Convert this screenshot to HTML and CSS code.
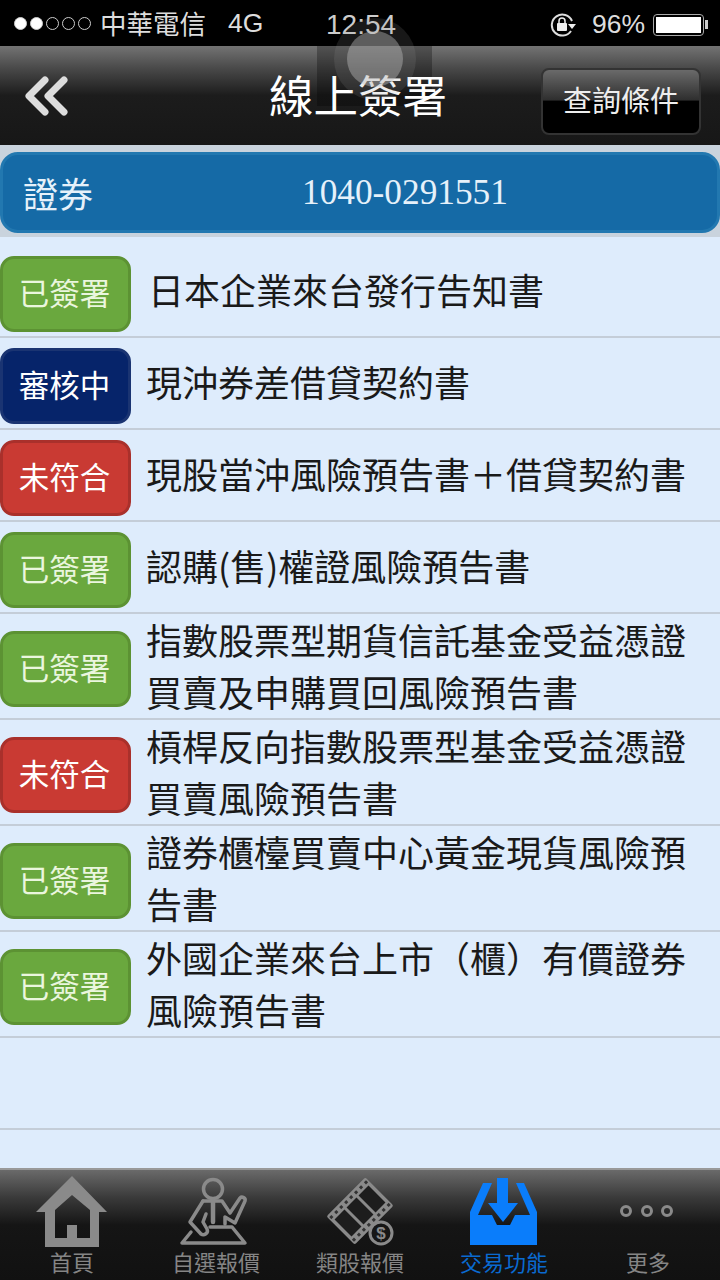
FILE: index.html
```html
<!DOCTYPE html>
<html lang="zh-Hant">
<head>
  <meta charset="UTF-8">
  <title>線上簽署</title>
  <link rel="stylesheet" href="styles.css">
</head>
<body>
  <div class="phone">
    <div class="status">
      <div class="status-left">
        <span class="signal"><i class="on"></i><i class="on"></i><i></i><i></i><i></i></span>
        <span class="carrier">中華電信</span>
        <span class="net">4G</span>
      </div>
      <div class="clock">12:54</div>
      <div class="status-right">
        <svg class="lock" width="26" height="24" viewBox="0 0 26 24" fill="none" stroke="#ddd" stroke-width="2">
          <path d="M21 18a10.500 10.500 0 1 1 1-10"/>
          <path d="M18 11h8l-4 5z" fill="#eee" stroke="none"/>
          <rect x="7" y="10" width="10" height="8" rx="1" fill="#eee" stroke="none"/>
          <path d="M9 10V8a3 3 0 0 1 6 0v2" stroke-width="1.500" stroke="#eee"/>
        </svg>
        <span class="pct">96%</span>
        <span class="battery"><span class="battery-fill"></span></span>
        <span class="battery-tip"></span>
      </div>
    </div>

    <div class="header">
      <div class="touch-square"></div>
      <svg class="back" width="46" height="42" viewBox="0 0 46 42" fill="none" stroke="#ddd" stroke-width="7" stroke-linecap="round" stroke-linejoin="round">
        <path d="M21 5L5 21l16 16"/>
        <path d="M40 5L24 21l16 16"/>
      </svg>
      <div class="title">線上簽署</div>
      <div class="query">查詢條件</div>
    </div>

    <div class="account-wrap">
      <div class="account">
        <span class="account-type">證券</span>
        <span class="account-no">1040-0291551</span>
      </div>
    </div>

    <div class="list">
      <div class="row">
        <span class="badge green">已簽署</span>
        <span class="doc first">日本企業來台發行告知書</span>
      </div>
      <div class="row">
        <span class="badge navy">審核中</span>
        <span class="doc">現沖券差借貸契約書</span>
      </div>
      <div class="row">
        <span class="badge red">未符合</span>
        <span class="doc">現股當沖風險預告書＋借貸契約書</span>
      </div>
      <div class="row">
        <span class="badge green">已簽署</span>
        <span class="doc">認購(售)權證風險預告書</span>
      </div>
      <div class="row tall">
        <span class="badge green">已簽署</span>
        <span class="doc">指數股票型期貨信託基金受益憑證<br>買賣及申購買回風險預告書</span>
      </div>
      <div class="row tall">
        <span class="badge red">未符合</span>
        <span class="doc">槓桿反向指數股票型基金受益憑證<br>買賣風險預告書</span>
      </div>
      <div class="row tall">
        <span class="badge green">已簽署</span>
        <span class="doc">證券櫃檯買賣中心黃金現貨風險預<br>告書</span>
      </div>
      <div class="row tall">
        <span class="badge green">已簽署</span>
        <span class="doc">外國企業來台上市（櫃）有價證券<br>風險預告書</span>
      </div>
      <div class="row"></div>
    </div>

    <div class="tabs">
      <div class="tab">
        <svg width="72" height="72" viewBox="0 0 72 72" fill="#8a8a8a">
          <path fill-rule="evenodd" d="M36 0L71 36H63V71H9V36H0z M36 19L19 34V62H31V49H41V62H54V34z"/>
        </svg>
        <span>首頁</span>
      </div>
      <div class="tab">
        <svg width="72" height="72" viewBox="0 0 72 72" fill="none" stroke="#8a8a8a" stroke-width="3.500" stroke-linejoin="round" stroke-linecap="round">
          <circle cx="33" cy="13" r="9.500"/>
          <path d="M23 25L10 46l11 12c3 2 8-1 6-5l-4-7 3-8"/>
          <path d="M23 25h19l8 12 10-15c2-2 6 0 5 3L55 47l-10-6v7"/>
          <path d="M33 26v20" stroke-width="4.500"/>
          <path d="M30 51h22l13 16H2l9-11"/>
        </svg>
        <span>自選報價</span>
      </div>
      <div class="tab">
        <svg width="72" height="72" viewBox="0 0 72 72" fill="none">
          <g transform="rotate(-45 36 35)">
            <rect x="8.500" y="15" width="55" height="40" rx="2" fill="#8a8a8a"/>
            <rect x="12" y="23" width="14" height="24" fill="#1d1d1d"/>
            <rect x="29" y="23" width="14" height="24" fill="#1d1d1d"/>
            <rect x="46" y="23" width="14" height="24" fill="#1d1d1d"/>
            <path d="M10 19h52M10 51h52" stroke="#333" stroke-width="3" stroke-dasharray="3 4"/>
          </g>
          <circle cx="57" cy="57" r="11" fill="#161616" stroke="#8a8a8a" stroke-width="3"/>
          <text class="dollar" x="57" y="63" text-anchor="middle">$</text>
        </svg>
        <span>類股報價</span>
      </div>
      <div class="tab active">
        <svg width="72" height="72" viewBox="0 0 72 72" fill="#0a7dfb">
          <path d="M29 2h11v25h10L35 46 20 27h9z"/>
          <path d="M15 7h9L10 39H24L29 49H42L47 39H62L48 7h8L69 36V69H2V36z"/>
        </svg>
        <span>交易功能</span>
      </div>
      <div class="tab">
        <svg width="72" height="72" viewBox="0 0 72 72" fill="none" stroke="#8a8a8a" stroke-width="3">
          <circle cx="14" cy="35" r="4.500"/>
          <circle cx="35" cy="35" r="4.500"/>
          <circle cx="55" cy="35" r="4.500"/>
        </svg>
        <span>更多</span>
      </div>
    </div>

    <div class="touch-ring"><div class="touch-dot"></div></div>
  </div>
</body>
</html>
```

FILE: styles.css
```css
* {
  box-sizing: border-box;
}

body {
  margin: 0;
  background-color: #000;
  font-family: "Noto Sans CJK TC", "Noto Sans", sans-serif;
}

.phone {
  position: relative;
  width: 720px;
  height: 1280px;
  display: flex;
  flex-direction: column;
  overflow: hidden;
  background-color: #deecfc;
}

/* status bar */
.status {
  height: 46px;
  flex: none;
  display: grid;
  grid-template-columns: 326px auto 1fr;
  align-items: center;
  background-color: #000;
  color: #ddd;
  font-size: 26.5px;
}

.status-left {
  display: flex;
  align-items: center;
  padding-left: 14px;
}

.signal {
  display: flex;
  gap: 3px;
  margin-right: 9px;
}

.signal i {
  width: 13px;
  height: 13px;
  border: 1px solid #ccc;
  border-radius: 50%;
}

.signal i.on {
  background-color: #fff;
}

.carrier {
  line-height: 46px;
}

.net {
  margin-left: 22px;
  font-family: "Liberation Sans", sans-serif;
}

.clock {
  padding-top: 3px;
  font-family: "Liberation Sans", sans-serif;
  font-size: 28px;
  color: #ccc;
}

.status-right {
  display: flex;
  align-items: center;
  justify-content: flex-end;
  padding: 3px 12px 0 0;
  font-family: "Liberation Sans", sans-serif;
}

.lock {
  margin-right: 16px;
}

.pct {
  margin-right: 8px;
}

.battery {
  width: 51px;
  height: 22px;
  padding: 2px;
  border: 1px solid #aaa;
  border-radius: 4px;
}

.battery-fill {
  display: block;
  width: 45px;
  height: 16px;
  background-color: #fff;
}

.battery-tip {
  width: 3px;
  height: 9px;
  margin-left: 1px;
  background-color: #ccc;
}

/* header */
.header {
  height: 99px;
  flex: none;
  position: relative;
  display: flex;
  align-items: center;
  justify-content: space-between;
  padding: 0 19px 0 24px;
  background: linear-gradient(#737373 0%, #4a4a4a 22%, #1c1c1c 50%, #171717 100%);
}

.back {
  margin-top: 1px;
}

.title {
  position: absolute;
  left: 269px;
  top: 15px;
  font-size: 44.5px;
  line-height: 66px;
  color: #fff;
}

.query {
  width: 160px;
  height: 67px;
  margin-top: 12px;
  border: 2px solid #333;
  border-radius: 8px;
  background: linear-gradient(#6a6a6a 0%, #2e2e2e 48%, #000 49%, #000 100%);
  color: #eee;
  font-size: 29px;
  line-height: 58px;
  text-align: center;
}

/* account bar */
.account-wrap {
  height: 92px;
  flex: none;
  margin-bottom: 9px;
  padding: 7px 0 4px;
  background-color: #c9d3dd;
}

.account {
  height: 81px;
  position: relative;
  display: flex;
  align-items: center;
  padding: 0 23px;
  border: 3px solid #2278b0;
  border-radius: 18px;
  background-color: #156aa6;
  color: #e6f1fa;
}

.account-type {
  margin-left: -3px;
  font-size: 35px;
}

.account-no {
  position: absolute;
  left: 299px;
  font-family: "Liberation Serif", serif;
  font-size: 35.3px;
}

/* list */
.list {
  flex: 1;
  overflow: hidden;
}

.row {
  height: 92px;
  display: flex;
  align-items: flex-start;
  padding-top: 10px;
  border-bottom: 2px solid #c4cdd8;
}

.row.tall {
  height: 106px;
  padding-top: 17px;
}

.badge {
  width: 131px;
  height: 76px;
  flex: none;
  padding-right: 2px;
  border: 3px solid;
  border-radius: 14px;
  font-size: 30.5px;
  line-height: 66px;
  text-align: center;
  color: #eaf6de;
}

.badge.green {
  background-color: #6aa83e;
  border-color: #5c9233;
}

.badge.navy {
  background-color: #06246a;
  border-color: #1a3472;
  color: #fff;
}

.badge.red {
  background-color: #c93a33;
  border-color: #a9302b;
  color: #fff;
}

.doc {
  margin: 7px 0 0 15px;
  font-size: 36px;
  line-height: 52px;
  color: #1a1a1a;
  white-space: nowrap;
}

.doc.first {
  margin-left: 17px;
}

.row.tall .doc {
  margin-top: -18px;
}

/* tab bar */
.tabs {
  height: 112px;
  flex: none;
  display: grid;
  grid-template-columns: repeat(5, 144px);
  border-top: 2px solid #999;
  background: linear-gradient(#6a6a6a 0%, #3a3a3a 25%, #151515 50%, #111 100%);
}

.tab {
  display: flex;
  flex-direction: column;
  align-items: center;
  padding-top: 6px;
  color: #858585;
  font-size: 22px;
  line-height: 26px;
}

.tab svg {
  flex: none;
}

.tab.active {
  color: #0a6ad0;
}

.dollar {
  fill: #8a8a8a;
  font-family: "Liberation Sans", sans-serif;
  font-size: 17px;
  font-weight: bold;
}

/* floating touch button, its square only shows on the header */
.touch-square {
  position: absolute;
  left: 317px;
  top: 0;
  width: 115px;
  height: 60px;
  background-color: rgba(0, 0, 0, 0.28);
}

.touch-ring {
  position: absolute;
  left: 334px;
  top: 18px;
  width: 82px;
  height: 82px;
  display: flex;
  align-items: center;
  justify-content: center;
  border-radius: 50%;
  background-color: rgba(150, 150, 150, 0.16);
}

.touch-dot {
  width: 56px;
  height: 56px;
  border-radius: 50%;
  background-color: rgba(190, 190, 190, 0.42);
}
```
